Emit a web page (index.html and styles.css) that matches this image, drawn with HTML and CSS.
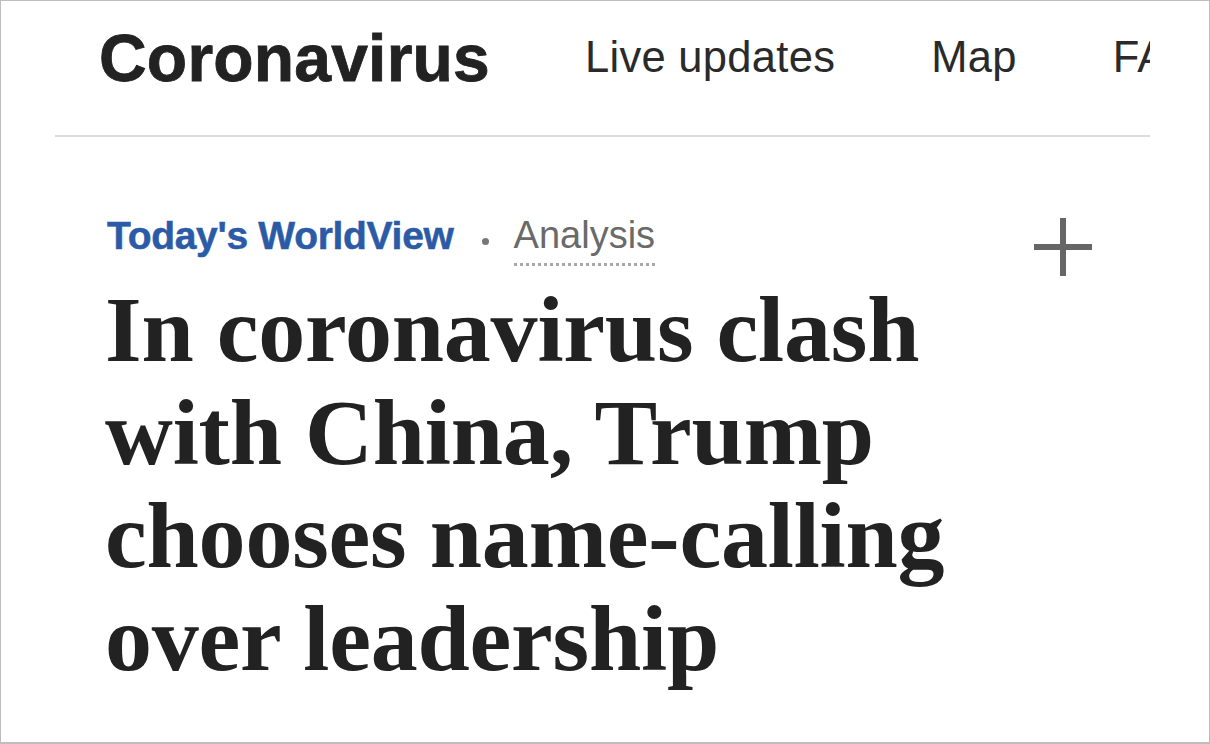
FILE: index.html
```html
<!DOCTYPE html>
<html lang="en">
<head>
<meta charset="utf-8">
<title>Coronavirus – Today's WorldView</title>
<link rel="stylesheet" href="styles.css">
</head>
<body>
<div class="frame">
  <header class="masthead">
    <div class="brand">Coronavirus</div>
    <nav class="nav">
      <a class="nav-item">Live updates</a>
      <a class="nav-item">Map</a>
      <a class="nav-item">FAQs</a>
    </nav>
  </header>
  <main class="article">
    <div class="kicker-row">
      <div class="kicker">
        <span class="section">Today's WorldView</span>
        <span class="dot"></span>
        <span class="label">Analysis</span>
      </div>
      <svg class="plus" width="60" height="60" viewBox="0 0 60 60" aria-hidden="true">
        <path d="M30 1 V59 M1 30 H59" stroke="#666" stroke-width="6" fill="none"/>
      </svg>
    </div>
    <h1 class="headline">In coronavirus clash with China, Trump chooses name-calling over leadership</h1>
  </main>
</div>
</body>
</html>
```

FILE: styles.css
```css
html, body {
  margin: 0;
  padding: 0;
  background: #fff;
}

.frame {
  width: 1210px;
  height: 744px;
  box-sizing: border-box;
  border: 1px solid #bdbdbd;
  border-bottom-width: 2px;
  overflow: hidden;
  background: #fff;
}

.masthead {
  width: 1051px;
  margin-left: 54px;
  height: 113px;
  padding-bottom: 21px;
  padding-left: 44px;
  box-sizing: content-box;
  border-bottom: 2px solid #dcdcdc;
  display: flex;
  align-items: center;
  gap: 95px;
  overflow: hidden;
  white-space: nowrap;
}

.brand {
  font-family: "Liberation Sans", Arial, sans-serif;
  font-weight: 700;
  font-size: 66px;
  line-height: 1;
  color: #222;
  letter-spacing: 0.2px;
  -webkit-text-stroke: 0.8px #222;
}

.nav {
  display: flex;
  align-items: center;
  gap: 96px;
}

.nav-item {
  font-family: "Liberation Sans", Arial, sans-serif;
  font-size: 43.5px;
  line-height: 1;
  color: #2a2a2a;
  letter-spacing: 0.3px;
}

.article {
  padding-left: 104px;
  padding-right: 116px;
}

.kicker-row {
  margin-top: 79px;
  height: 62px;
  display: flex;
  justify-content: space-between;
  align-items: flex-start;
}

.kicker {
  display: flex;
  align-items: flex-start;
  margin-left: 2px;
  line-height: 1;
}

.section {
  font-family: "Liberation Sans", Arial, sans-serif;
  font-weight: 700;
  font-size: 39px;
  color: #2b5aa6;
  letter-spacing: -0.3px;
  -webkit-text-stroke: 0.5px #2b5aa6;
}

.dot {
  width: 7px;
  height: 7px;
  border-radius: 50%;
  background: #777;
  margin: 22px 25px 0 28px;
}

.label {
  font-family: "Liberation Sans", Arial, sans-serif;
  font-size: 38px;
  color: #6a6a6a;
  padding-bottom: 9px;
  border-bottom: 3px dotted #a8a8a8;
}

.plus {
  display: block;
  margin-top: 1px;
}

.headline {
  margin: 0;
  max-width: 940px;
  font-family: "Liberation Serif", "Times New Roman", serif;
  font-weight: 700;
  font-size: 94px;
  line-height: 103px;
  letter-spacing: -0.2px;
  color: #222;
}
```
